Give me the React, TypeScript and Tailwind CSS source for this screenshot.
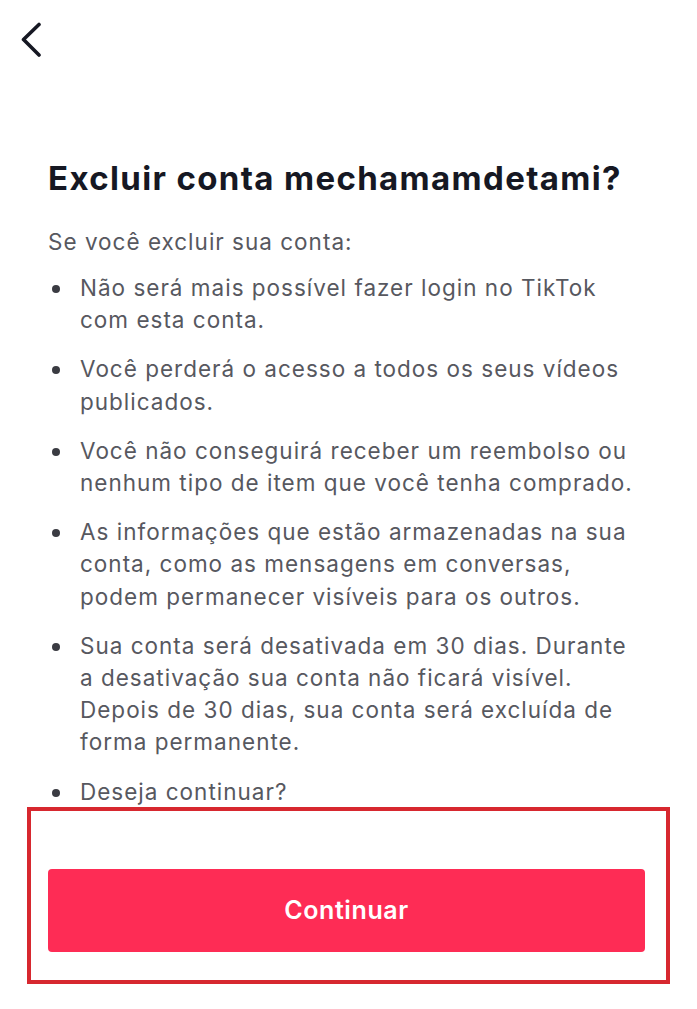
import React from "react";

const items: string[][] = [
  ["Não será mais possível fazer login no TikTok", "com esta conta."],
  ["Você perderá o acesso a todos os seus vídeos", "publicados."],
  ["Você não conseguirá receber um reembolso ou", "nenhum tipo de item que você tenha comprado."],
  ["As informações que estão armazenadas na sua", "conta, como as mensagens em conversas,", "podem permanecer visíveis para os outros."],
  [
    "Sua conta será desativada em 30 dias. Durante",
    "a desativação sua conta não ficará visível.",
    "Depois de 30 dias, sua conta será excluída de",
    "forma permanente.",
  ],
  ["Deseja continuar?"],
];

export default function App() {
  return (
    <div
      className="w-[697px] h-[1009px] bg-white flex flex-col overflow-hidden"
      style={{ fontFamily: "Inter, 'Noto Sans', sans-serif" }}
    >
      <div className="pl-[20px] pt-[22px] h-[60px]">
        <svg width="24" height="36" viewBox="0 0 24 36" fill="none">
          <path d="M19 2.5 L3.5 17.5 L19 33" stroke="#161823" strokeWidth="3.6" strokeLinecap="round" strokeLinejoin="round" />
        </svg>
      </div>
      <div className="px-[48px] pt-[98px]">
        <h1 className="text-[33px] leading-[40px] font-bold text-[#161823] tracking-[1.35px] whitespace-nowrap">
          Excluir conta mechamamdetami?
        </h1>
        <p className="mt-[28px] text-[22.5px] leading-[32px] tracking-[1px] text-[#57585f]">Se você excluir sua conta:</p>
        <ul className="mt-[14px] flex flex-col gap-[17px]">
          {items.map((lines, i) => (
            <li key={i} className="flex text-[22.5px] leading-[32.2px] tracking-[1px] text-[#57585f]">
              <span className="w-[32px] shrink-0 flex pt-[13px] pl-[4px]">
                <span className="w-[8px] h-[8px] rounded-full bg-[#3a3b42]" />
              </span>
              <span className="flex flex-col whitespace-nowrap">
                {lines.map((l, j) => (
                  <span key={j}>{l}</span>
                ))}
              </span>
            </li>
          ))}
        </ul>
      </div>
      <div className="mx-[27px] -mt-[1px] border-4 border-[#d7282f] h-[177px] pt-[58px] px-[17px]">
        <button className="w-[597px] h-[83px] rounded-[4px] bg-[#fe2c55] text-white text-[25px] tracking-[0.6px] font-semibold">
          Continuar
        </button>
      </div>
    </div>
  );
}
